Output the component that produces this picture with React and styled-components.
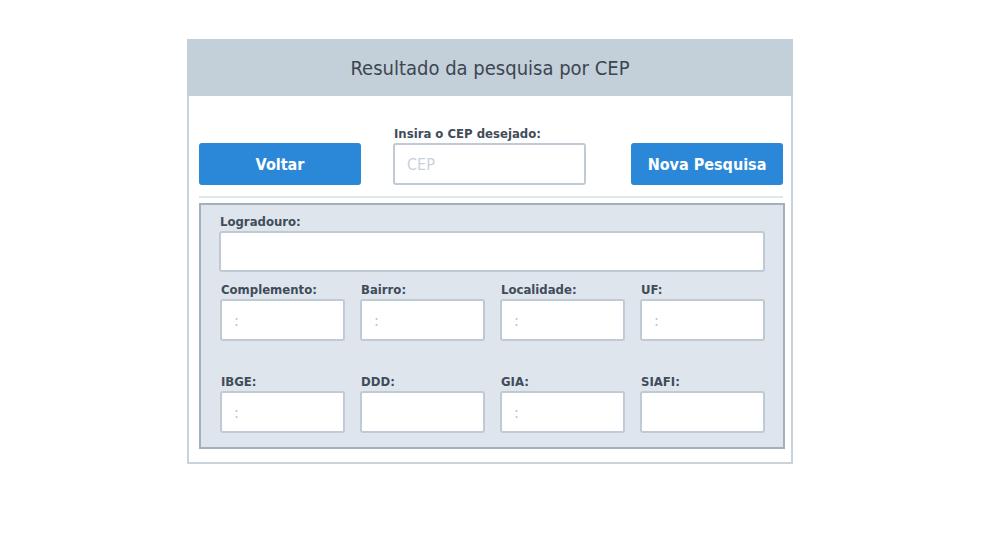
import React from 'react'
import styled, { createGlobalStyle } from 'styled-components'

const GlobalStyle = createGlobalStyle`
  body {
    margin: 0;
    background: #ffffff;
    font-family: "DejaVu Sans Condensed", "Roboto", sans-serif;
  }
`

const Card = styled.div`
  width: 602px;
  margin: 39px 0 0 187px;
  border: 2px solid #c9d3dc;
  border-top: none;
  background: #fff;
`

const Header = styled.div`
  height: 57px;
  margin: 0 -2px;
  background: #c4d0d9;
  display: flex;
  align-items: center;
  justify-content: center;
  color: #3c4651;
  font-size: 20px;
`

const Body = styled.div`
  padding: 31px 6px 13px 10px;
`

const SearchRow = styled.div`
  display: flex;
  align-items: flex-end;
`

const Button = styled.button`
  width: ${p => p.$w}px;
  height: 42px;
  margin-left: ${p => p.$ml || 0}px;
  border: none;
  border-radius: 3px;
  background: #2b88d8;
  color: #fff;
  font-family: inherit;
  font-weight: bold;
  font-size: 16px;
  cursor: pointer;
`

const Field = styled.div`
  display: flex;
  flex-direction: column;
  width: ${p => (p.$w ? `${p.$w}px` : 'auto')};
  margin-left: ${p => p.$ml || 0}px;
`

const Label = styled.label`
  color: #3f4c59;
  font-size: 13px;
  line-height: 14px;
  font-weight: bold;
  margin-bottom: 2px;
  margin-left: 1px;
`

const Input = styled.input`
  box-sizing: border-box;
  height: ${p => p.$h || 42}px;
  width: 100%;
  border: 2px solid #c0cad4;
  border-radius: 3px;
  background: #fff;
  padding: 0 12px;
  font-family: inherit;
  font-size: 16px;
  outline: none;
  &::placeholder {
    color: #c8d2dc;
  }
`

const Divider = styled.div`
  height: 2px;
  width: 584px;
  background: #e1e7ed;
  margin: 11px 0 5px;
`

const Panel = styled.div`
  border: 2px solid #a3afba;
  background: #dfe5ed;
  padding: 10px 18px 14px 18px;
`

const Grid = styled.div`
  display: grid;
  grid-template-columns: repeat(4, 125px);
  column-gap: 15px;
  row-gap: 34px;
  margin-top: 11px;
  padding-left: 1px;
`

const SmallInput = styled(Input)`
  &::placeholder {
    color: #b9c3cd;
  }
`

const fields = [
  ['Complemento:', true],
  ['Bairro:', true],
  ['Localidade:', true],
  ['UF:', true],
  ['IBGE:', true],
  ['DDD:', false],
  ['GIA:', true],
  ['SIAFI:', false],
]

export default function App() {
  return (
    <>
      <GlobalStyle />
      <Card>
        <Header>Resultado da pesquisa por CEP</Header>
        <Body>
          <SearchRow>
            <Button $w={162}>Voltar</Button>
            <Field $w={193} $ml={32}>
              <Label>Insira o CEP desejado:</Label>
              <Input placeholder="CEP" />
            </Field>
            <Button $w={152} $ml={45}>Nova Pesquisa</Button>
          </SearchRow>
          <Divider />
          <Panel>
            <Field>
              <Label>Logradouro:</Label>
              <Input $h={41} />
            </Field>
            <Grid>
              {fields.map(([name, ph]) => (
                <Field key={name}>
                  <Label>{name}</Label>
                  <SmallInput placeholder={ph ? ':' : ''} />
                </Field>
              ))}
            </Grid>
          </Panel>
        </Body>
      </Card>
    </>
  )
}
